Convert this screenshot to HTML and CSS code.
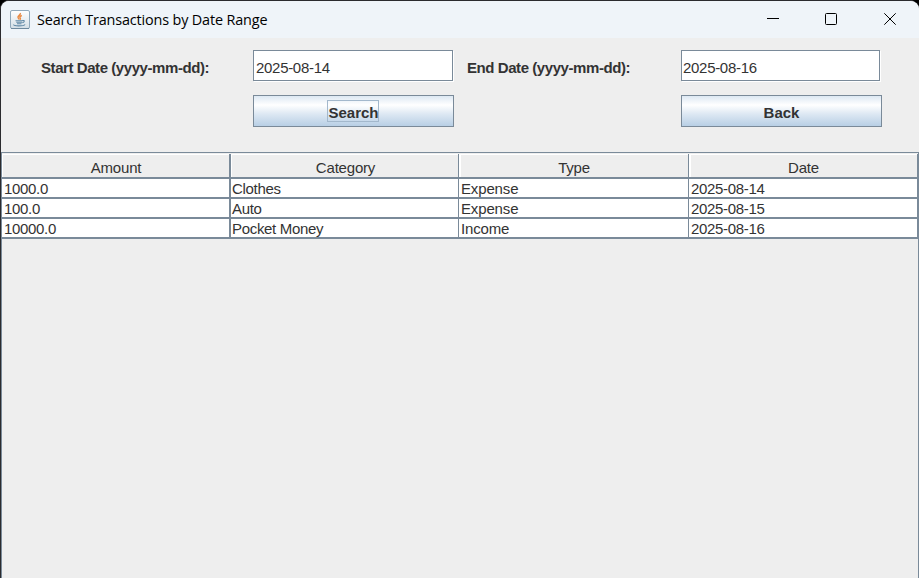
FILE: index.html
```html
<!DOCTYPE html>
<html lang="en">
<head>
<meta charset="utf-8">
<title>Search Transactions by Date Range</title>
<link rel="stylesheet" href="styles.css">
</head>
<body>
<div class="window">
  <header class="titlebar">
    <svg class="app-icon" width="20" height="20" viewBox="0 0 20 20">
      <defs><linearGradient id="tile" x2="0" y2="1"><stop offset="0" stop-color="#fff"/><stop offset="1" stop-color="#d3dee6"/></linearGradient></defs>
      <rect x=".5" y=".5" width="19" height="18" rx="1.5" fill="url(#tile)" stroke="#91a9bb"/>
      <path d="M1 18.5h18" stroke="#6e899e"/>
      <path d="M10.300 3c1 1.800-3 2.800-2.300 4.600.3.800 1 1.200 1.200 1.900M11.800 5.500c-2 1-2.500 1.600-1.500 2.700.4.700 0 1.200-.4 1.500" fill="none" stroke="#e98b45" stroke-width="1.400"/>
      <path d="M5.500 10.700h7M6.300 12.300h5.700M7 13.800h4.500M12.500 10.500c2.500-.3 2.300 1.500-.2 2.200M3.800 14.500c-.8 1.700 9.500 2 11.300 0" fill="none" stroke="#6189a6" stroke-width="1.100"/>
    </svg>
    <h1 class="title">Search Transactions by Date Range</h1>
    <div class="controls">
      <svg width="12" height="12" viewBox="0 0 12 12"><path d="M1 5.500h12"/></svg>
      <svg width="12" height="12" viewBox="0 0 12 12"><rect x=".5" y=".5" width="11" height="11" rx="1"/></svg>
      <svg width="12" height="12" viewBox="0 0 12 12"><path d="M.3.300l11.400 11.400M11.700.300L.3 11.700"/></svg>
    </div>
  </header>
  <form class="search">
    <label for="start">Start Date (yyyy-mm-dd):</label>
    <input id="start" type="text" value="2025-08-14">
    <label for="end">End Date (yyyy-mm-dd):</label>
    <input id="end" type="text" value="2025-08-16">
    <button class="btn-search" type="button"><span class="focus">Search</span></button>
    <button class="btn-back" type="button">Back</button>
  </form>
  <main class="scroll">
    <table>
      <colgroup><col class="c1"><col class="c2"><col class="c3"><col class="c4"></colgroup>
      <thead><tr><th>Amount</th><th>Category</th><th>Type</th><th>Date</th></tr></thead>
      <tbody>
        <tr><td>1000.0</td><td>Clothes</td><td>Expense</td><td>2025-08-14</td></tr>
        <tr><td>100.0</td><td>Auto</td><td>Expense</td><td>2025-08-15</td></tr>
        <tr><td>10000.0</td><td>Pocket Money</td><td>Income</td><td>2025-08-16</td></tr>
      </tbody>
    </table>
  </main>
</div>
</body>
</html>
```
FILE: styles.css
```css
* { box-sizing: border-box; }
body { margin: 0; background: #000; overflow: hidden; }
.window {
  width: 919px;
  height: 578px;
  display: flex;
  flex-direction: column;
  border: solid #2b2b2e;
  border-width: 1px 0 0 1px;
  border-radius: 9px 9px 0 0;
  background: #eee;
  color: #333;
  font: 15px "Liberation Sans", Arial, sans-serif;
  overflow: hidden;
}
.titlebar {
  height: 37px;
  flex: none;
  display: flex;
  align-items: center;
  padding: 0 23px 0 9px;
  background: #eff4f9;
}
.title {
  margin: 0 0 0 7px;
  color: #000;
  font: 14.4px/20px "Open Sans", "Noto Sans", sans-serif;
  letter-spacing: -0.15px;
}
.controls { display: flex; gap: 47px; margin: -2px 0 0 auto; }
.controls svg { fill: none; stroke: #000; stroke-width: 1; overflow: visible; }
.search {
  height: 114px;
  flex: none;
  display: grid;
  grid-template-columns: 212px 201px 227px 201px;
  grid-template-rows: 32px 32px;
  row-gap: 13px;
  padding: 12px 0 0 40px;
}
label {
  font-weight: bold;
  line-height: 36px;
  letter-spacing: -0.43px;
  white-space: nowrap;
}
label[for="end"] { padding-left: 13px; }
input {
  width: 200px;
  height: 31px;
  margin: 0;
  padding: 4px 0 0 2px;
  border: 1px solid #7a8a99;
  border-radius: 0;
  outline: 0;
  background: #fff;
  box-shadow: 1px 1px #fff;
  color: #333;
  font: inherit;
  letter-spacing: -0.3px;
}
#end { width: 199px; padding-left: 1px; }
button {
  width: 201px;
  height: 32px;
  padding: 2px 0 0;
  border: 1px solid #7a8a99;
  border-radius: 0;
  background: linear-gradient(#dde8f3, #fff 30%, #dde8f3 60%, #b8cfe5);
  color: #333;
  font: bold 15px "Liberation Sans", Arial, sans-serif;
}
.btn-search { grid-column: 2; padding: 0 2px 0 0; }
.btn-back { grid-column: 4; }
.focus {
  display: block;
  width: 52px;
  height: 22px;
  margin: 0 auto;
  padding-left: 1px;
  border: 1px solid #a3b8cc;
  line-height: 24px;
  text-align: left;
}
.scroll {
  flex: 1;
  padding-top: 1px;
  border: solid #7a8a99;
  border-width: 1px 1px 0;
}
table { width: 916px; border-collapse: separate; border-spacing: 0; table-layout: fixed; }
.c1 { width: 229px; }
.c2 { width: 228px; }
.c3 { width: 230px; }
.c4 { width: 229px; }
th {
  height: 25px;
  padding: 5px 0 0 1px;
  border-right: 1px solid #7a8a99;
  border-bottom: 2px solid #7a8a99;
  box-shadow: inset 1px 1px #fff;
  font-weight: normal;
  line-height: 18px;
  letter-spacing: -0.2px;
}
td {
  height: 20px;
  padding: 1px 0 0 2px;
  border-right: 1px solid #7a8a99;
  border-bottom: 2px solid #7a8a99;
  background: #fff;
  line-height: 17px;
  letter-spacing: -0.32px;
}
th:first-child, td:first-child { border-right-width: 2px; }
th:nth-child(2) { padding-left: 2px; }
td:nth-child(2) { padding-left: 1px; }
td:nth-child(3) { letter-spacing: -0.15px; }
th:nth-child(n+3) { box-shadow: inset 2px 1px #fff; }
```
